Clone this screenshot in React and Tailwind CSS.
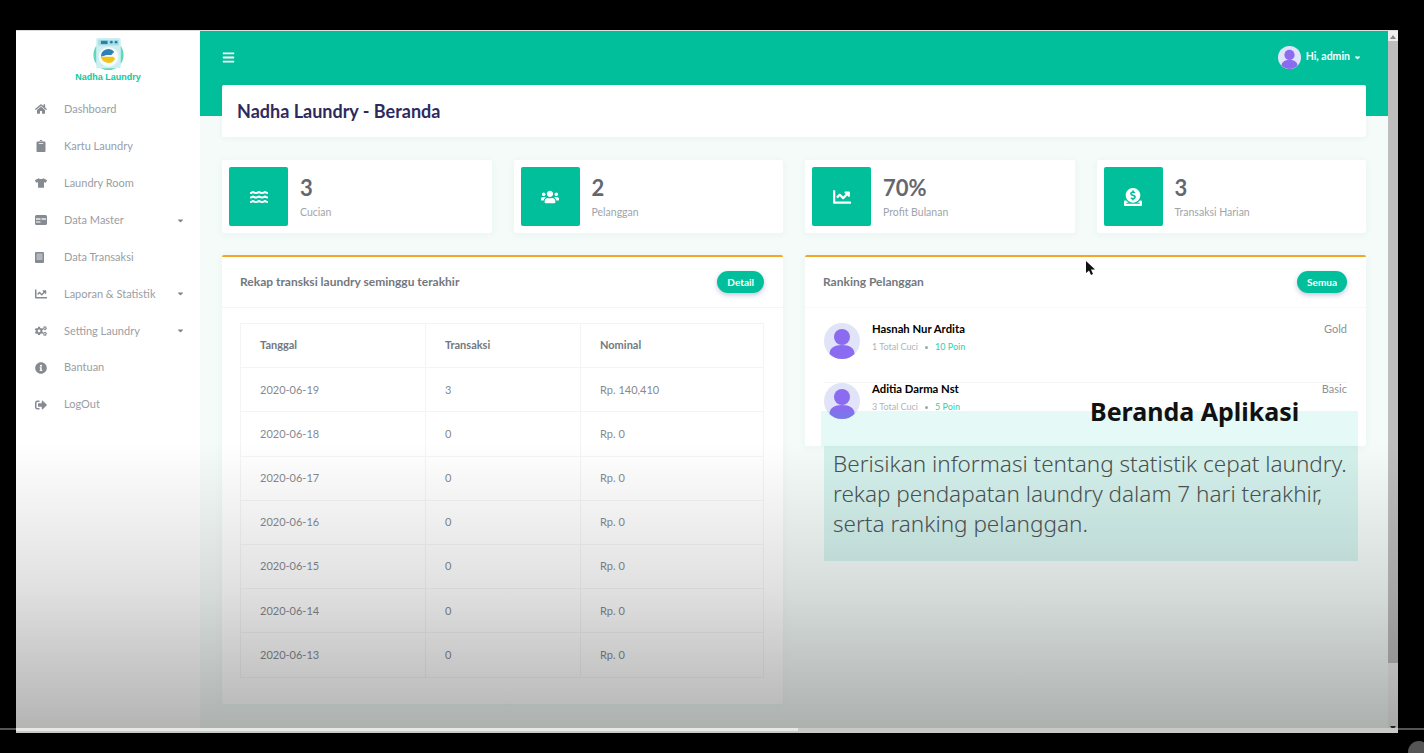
import {
  FaHome, FaClipboard, FaTshirt, FaChartLine, FaCogs,
  FaInfoCircle, FaSignOutAlt, FaBars, FaWater, FaUsers, FaDonate, FaCaretDown,
} from "react-icons/fa";

// the two menu icons that no icon set has in this exact shape
function CardIcon(props) {
  return (
    <svg width="12" height="10" viewBox="0 0 12 10" {...props}>
      <rect width="12" height="10" rx="1.500" fill="#868b92" />
      <rect x="1" y="3" width="4.500" height="2" fill="#d5d7da" />
      <rect x="6.500" y="3" width="4.500" height="2" fill="#d5d7da" />
      <rect x="1" y="6" width="4.500" height="2" fill="#c2c5c9" />
    </svg>
  );
}

function BookIcon(props) {
  return (
    <svg width="9" height="11" viewBox="0 0 9 11" {...props}>
      <rect width="9" height="11" rx="1" fill="#868b92" />
      <rect x="1.500" y="1.500" width="6" height="6.500" fill="#b4b7bb" />
    </svg>
  );
}

const menu = [
  { icon: FaHome, label: "Dashboard" },
  { icon: FaClipboard, label: "Kartu Laundry" },
  { icon: FaTshirt, label: "Laundry Room" },
  { icon: CardIcon, label: "Data Master", caret: true },
  { icon: BookIcon, label: "Data Transaksi" },
  { icon: FaChartLine, label: "Laporan & Statistik", caret: true },
  { icon: FaCogs, label: "Setting Laundry", caret: true },
  { icon: FaInfoCircle, label: "Bantuan" },
  { icon: FaSignOutAlt, label: "LogOut" },
];

const stats = [
  { icon: FaWater, value: "3", label: "Cucian" },
  { icon: FaUsers, value: "2", label: "Pelanggan" },
  { icon: FaChartLine, value: "70%", label: "Profit Bulanan" },
  { icon: FaDonate, value: "3", label: "Transaksi Harian" },
];

const rows = [
  ["2020-06-19", "3", "Rp. 140,410"],
  ["2020-06-18", "0", "Rp. 0"],
  ["2020-06-17", "0", "Rp. 0"],
  ["2020-06-16", "0", "Rp. 0"],
  ["2020-06-15", "0", "Rp. 0"],
  ["2020-06-14", "0", "Rp. 0"],
  ["2020-06-13", "0", "Rp. 0"],
];

const ranking = [
  { name: "Hasnah Nur Ardita", total: "1 Total Cuci", poin: "10 Poin", level: "Gold" },
  { name: "Aditia Darma Nst", total: "3 Total Cuci", poin: "5 Poin", level: "Basic" },
];

function Avatar({ size }) {
  return (
    <svg width={size} height={size} viewBox="0 0 36 36" className="shrink-0">
      <circle cx="18" cy="18" r="18" fill="#e1e4f8" />
      <circle cx="18" cy="14" r="8" fill="#8b6cf0" />
      <path d="M5.500 31c0-6 5-9 12.500-9s12.500 3 12.500 9c-3 3-7.500 5-12.500 5s-9.500-2-12.500-5z" fill="#8b6cf0" />
    </svg>
  );
}

function Logo() {
  return (
    <svg width="33" height="34" viewBox="0 0 34 36">
      <circle cx="17" cy="19" r="16" fill="#5fd8bd" />
      <rect x="4" y="1" width="26" height="32" rx="2" fill="#cfeef0" />
      <rect x="6" y="3" width="22" height="6" fill="#a8e0e6" />
      <rect x="9" y="4" width="7" height="3.500" fill="#2c7fa8" />
      <circle cx="20" cy="5.500" r="1.500" fill="#2c7fa8" />
      <circle cx="25" cy="5.500" r="1.500" fill="#2c7fa8" />
      <circle cx="17" cy="21" r="10.500" fill="#f4fbfb" />
      <path d="M9 21a8 8 0 0 1 14-5.500l-3 3.500H15z" fill="#2f7fb8" />
      <path d="M9 21h13l2 2a8 8 0 0 1-15-2z" fill="#f2c21d" />
    </svg>
  );
}

function Badge({ children }) {
  return (
    <span className="flex h-[22px] items-center rounded-full bg-[#00bf9a] px-[10px] text-[10px] font-bold text-white shadow-[0_2px_5px_rgba(60,60,140,0.3)]">
      {children}
    </span>
  );
}

export default function App() {
  return (
    <div className="relative h-[753px] w-[1424px] overflow-hidden bg-black pl-4 pt-[30px] font-['Lato',sans-serif]">
      <div className="absolute left-0 top-[728px] h-[2px] w-full bg-[#555]" />
      <div className="relative flex h-[703px] w-[1382px] border-t border-[#ddd]">
        <aside className="w-[184px] shrink-0 bg-white">
          <div className="flex h-[56px] flex-col items-center pt-[6px]">
            <Logo />
            <span className="text-[9px] font-bold leading-3 text-[#10c89c] font-['Liberation_Sans',sans-serif]">
              Nadha Laundry
            </span>
          </div>
          <nav className="pt-[4px]">
            {menu.map((m) => (
              <div key={m.label} className="flex h-[36.900px] items-center pl-[19px] pr-[15px] text-[#9a9ea4]">
                <span className="flex w-[29px] justify-start">
                  <m.icon size={12} className="text-[#868b92]" />
                </span>
                <span className="flex-1 text-[11px]">{m.label}</span>
                {m.caret && <FaCaretDown size={9} className="text-[#80858b]" />}
              </div>
            ))}
          </nav>
        </aside>

        <main className="flex-1 bg-[#f4fbf8]">
          <div className="h-[85px] bg-[#00bf9a]">
            <div className="flex h-[52px] items-center justify-between pl-[22px] pr-[26px] text-white">
              <FaBars size={13} />
              <div className="flex items-center text-[10.500px] font-bold">
                <Avatar size={23} />
                <span className="ml-[5px] mr-[3px]">Hi, admin</span>
                <FaCaretDown size={9} />
              </div>
            </div>
          </div>
          <div className="mx-[22px] -mt-[31px] flex h-[52px] items-center rounded-[2px] bg-white pl-[15px] text-[18px] font-bold text-[#2e2a5e] shadow-[0_1px_6px_rgba(0,120,90,0.05)]">
            Nadha Laundry - Beranda
          </div>

          <div className="mx-[22px] mt-[23px] grid grid-cols-4 gap-[22px]">
            {stats.map((s) => (
              <div key={s.label} className="flex h-[73px] items-center rounded-[2px] bg-white p-[7px] shadow-[0_1px_8px_rgba(0,120,90,0.05)]">
                <div className="flex h-[59px] w-[59px] items-center justify-center rounded-[2px] bg-[#00bf9a] text-white">
                  <s.icon size={18} />
                </div>
                <div className="ml-[12px]">
                  <div className="text-[22px] font-bold leading-[28px] text-[#636870]">{s.value}</div>
                  <div className="mt-[3px] text-[10.500px] leading-[14px] text-[#a0a5ab]">{s.label}</div>
                </div>
              </div>
            ))}
          </div>

          <div className="mx-[22px] mt-[22px] grid grid-cols-2 items-start gap-[22px]">
            <section className="h-[449px] rounded-[2px] border-t-2 border-[#f5a623] bg-white shadow-[0_1px_8px_rgba(0,120,90,0.05)]">
              <div className="flex h-[51px] items-center justify-between border-b border-[#f4f5f5] pl-[18px] pr-[19px]">
                <span className="text-[12px] font-bold text-[#73787e]">Rekap transksi laundry seminggu terakhir</span>
                <Badge>Detail</Badge>
              </div>
              <div className="ml-[18px] mr-[19px] mt-[15px]">
                <table className="w-full table-fixed border-collapse text-[11px] text-[#858a90]">
                  <colgroup>
                    <col className="w-[185px]" />
                    <col className="w-[155px]" />
                    <col />
                  </colgroup>
                  <thead>
                    <tr className="h-[44.300px] font-bold text-[#73787e]">
                      <th className="border border-[#f3f4f4] pl-[19px] text-left">Tanggal</th>
                      <th className="border border-[#f3f4f4] pl-[19px] text-left">Transaksi</th>
                      <th className="border border-[#f3f4f4] pl-[19px] text-left">Nominal</th>
                    </tr>
                  </thead>
                  <tbody>
                    {rows.map((r) => (
                      <tr key={r[0]} className="h-[44.200px]">
                        {r.map((c, i) => (
                          <td key={i} className="border border-[#f3f4f4] pl-[19px]">{c}</td>
                        ))}
                      </tr>
                    ))}
                  </tbody>
                </table>
              </div>
            </section>

            <section className="h-[191px] rounded-[2px] border-t-2 border-[#f5a623] bg-white shadow-[0_1px_8px_rgba(0,120,90,0.05)]">
              <div className="flex h-[51px] items-center justify-between border-b border-[#f7f8f8] pl-[18px] pr-[19px]">
                <span className="text-[12px] font-bold text-[#73787e]">Ranking Pelanggan</span>
                <Badge>Semua</Badge>
              </div>
              <div className="ml-[19px] mr-[19px] mt-[15px]">
                {ranking.map((p, i) => (
                  <div key={p.name} className={`flex h-[60px] items-start ${i === 0 ? "border-b border-[#f4f5f5]" : ""}`}>
                    <Avatar size={36} />
                    <div className="ml-[12px] flex-1">
                      <div className="-mt-[1px] text-[11.300px] font-bold leading-[14px] text-black">{p.name}</div>
                      <div className="mt-[5px] flex items-center text-[9px] leading-[12px] text-[#b0b4b8]">
                        {p.total}
                        <span className="mx-[7px] h-[3px] w-[3px] rounded-full bg-[#9aa]" />
                        <span className="text-[#2dd0b0]">{p.poin}</span>
                      </div>
                    </div>
                    <span className="-mt-[1px] text-[11px] leading-[14px] text-[#8d9196]">{p.level}</span>
                  </div>
                ))}
              </div>
            </section>
          </div>
        </main>

        <div className="relative flex w-[10px] shrink-0 flex-col bg-[#efefef]">
          <svg className="absolute left-[2px] top-[4px]" width="6" height="4" viewBox="0 0 6 4">
            <path d="M3 0l3 4H0z" fill="#888" />
          </svg>
          <div className="mt-[10px] h-[622px] bg-[#bdbdbd]" />
          <svg className="absolute bottom-[3px] left-[2px]" width="6" height="4" viewBox="0 0 6 4">
            <path d="M0 0h6L3 4z" fill="#333" />
          </svg>
        </div>

        {/* video fade over the lower half */}
        <div className="pointer-events-none absolute inset-x-0 bottom-0 h-[290px] bg-gradient-to-b from-transparent via-black/[0.12] to-black/30" />
        <div className="absolute inset-x-0 bottom-0 h-[5px] bg-[#c8cac8]">
          <div className="h-[3px] w-[782px] bg-[#e8e8e6]" />
        </div>

        {/* caption */}
        <div className="absolute left-[805px] top-[380px] w-[537px] font-['Noto_Sans',sans-serif]">
          <div className="h-[35px] bg-[#00c8b4]/10">
            <div className="absolute -top-[15px] left-[269px] whitespace-nowrap text-[25px] font-bold leading-[30px] text-[#111]">Beranda Aplikasi</div>
          </div>
          <div className="ml-[3px] h-[115px] whitespace-nowrap bg-[#00a898]/[0.13] pl-[9px] pt-[3px] text-[22.500px] font-light leading-[30px] text-[#4a4f50]">
            Berisikan informasi tentang statistik cepat laundry.
            <br />
            rekap pendapatan laundry dalam 7 hari terakhir,
            <br />
            serta ranking pelanggan.
          </div>
        </div>

        {/* mouse cursor */}
        <svg className="absolute left-[1069px] top-[230px]" width="10" height="15" viewBox="0 0 10 15">
          <path d="M1 0v12l3-2.500 2 4.500 2-1-2-4.500h4z" fill="#111" />
        </svg>
      </div>
      <div className="absolute -bottom-[10px] left-[1408px] h-[22px] w-[22px] rounded-full bg-[#555]" />
    </div>
  );
}
